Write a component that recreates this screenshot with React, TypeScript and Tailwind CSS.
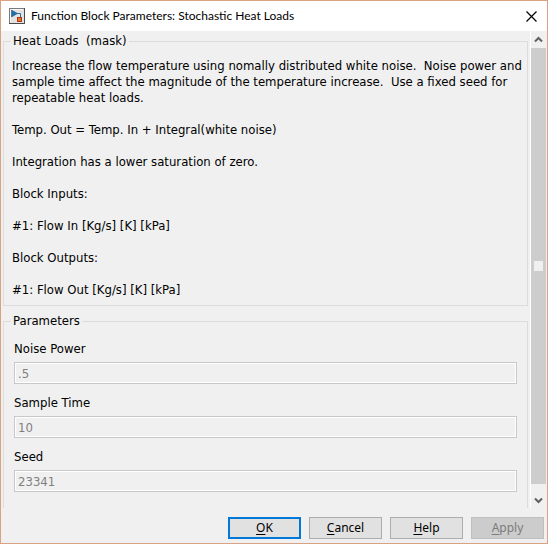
import type { ReactNode } from 'react';

const description = [
  'Temp. Out = Temp. In + Integral(white noise)',
  'Integration has a lower saturation of zero.',
  'Block Inputs:',
  '#1: Flow In [Kg/s] [K] [kPa]',
  'Block Outputs:',
  '#1: Flow Out [Kg/s] [K] [kPa]',
];

const parameters = [
  { id: 'noise-power', label: 'Noise Power', value: '.5' },
  { id: 'sample-time', label: 'Sample Time', value: '10' },
  { id: 'seed', label: 'Seed', value: '23341' },
];

function BlockIcon() {
  return (
    <svg width="16" height="16" viewBox="0 0 16 16" aria-hidden="true">
      <rect x="0.5" y="0.5" width="15" height="15" fill="#e2e2e2" stroke="#7a7a7a" />
      <path d="M15.5 0v15.5H0" fill="none" stroke="#4a4a4a" />
      <path d="M1.5 14V1.5H14" fill="none" stroke="#f8f8f8" />
      <path d="M8 5.5h3.5V9" fill="none" stroke="#2f6f9f" />
      <path d="M2.5 2v7L8.5 5.5z" fill="#1f6fa8" stroke="#174f80" strokeWidth="0.5" />
      <rect x="8.5" y="9.5" width="4" height="4" fill="#e8702a" stroke="#b03a10" />
    </svg>
  );
}

function Group({ title, className, children }: { title: string; className: string; children: ReactNode }) {
  return (
    <fieldset className={`min-w-0 border border-[#dcdcdc] ${className}`}>
      <legend className="ml-[7px] px-[2px] leading-4 whitespace-pre">{title}</legend>
      {children}
    </fieldset>
  );
}

function DialogButton({ label, kind = 'normal' }: { label: string; kind?: 'normal' | 'default' | 'disabled' }) {
  const look = {
    normal: 'border border-[#adadad] bg-[#e1e1e1] text-black',
    default: 'border-2 border-[#0078d7] bg-[#e1e1e1] text-black',
    disabled: 'border border-[#bfbfbf] bg-[#cccccc] text-[#7c7c7c]',
  }[kind];
  return (
    <button
      type="button"
      disabled={kind === 'disabled'}
      className={`flex h-[22px] w-[73px] items-center justify-center font-['Noto_Sans','Open_Sans',sans-serif] text-[12px] ${look}`}
    >
      <span className="underline underline-offset-2">{label[0]}</span>
      {label.slice(1)}
    </button>
  );
}

export default function App() {
  return (
    <div className="flex min-h-screen flex-col border border-[#d9a282] bg-[#f0f0f0] font-['DejaVu_Sans_Condensed','DejaVu_Sans',sans-serif] text-[13px] leading-4 text-black">
      <header className="flex h-[30px] items-center bg-white pl-2">
        <BlockIcon />
        <h1 className="ml-[6px] font-['Lato','Open_Sans',sans-serif] text-[12px]">
          Function Block Parameters: Stochastic Heat Loads
        </h1>
        <button type="button" aria-label="Close" className="mr-2 ml-auto flex size-4 items-center justify-center">
          <svg width="11" height="11" viewBox="0 0 11 11">
            <path d="M0.5 0.5l10 10M10.5 0.5l-10 10" stroke="#000" strokeWidth="1.2" />
          </svg>
        </button>
      </header>

      <div className="flex grow">
        <main className="flex min-w-0 grow flex-col gap-[7px] pt-[2px] pr-[2px] pl-[2px]">
          <Group title="Heat Loads  (mask)" className="pb-[7px]">
            <div className="mt-[9px] space-y-4 pl-2">
              <p>
                Increase the flow temperature using nomally distributed white noise.&nbsp; Noise power and sample time
                affect the magnitude of the temperature increase.&nbsp; Use a fixed seed for repeatable heat loads.
              </p>
              {description.map((line) => (
                <p key={line}>{line}</p>
              ))}
            </div>
          </Group>

          <Group title="Parameters" className="grow border-b-0 pb-[14px]">
            <div className="mt-3 flex flex-col gap-[11px] px-[10px]">
              {parameters.map(({ id, label, value }) => (
                <div key={id} className="flex flex-col gap-[5px]">
                  <label htmlFor={id}>{label}</label>
                  <input
                    id={id}
                    disabled
                    defaultValue={value}
                    className="h-[22px] w-full border border-[#c8c8c8] bg-[#f0f0f0] px-[3px] text-[#808080] inset-ring inset-ring-white"
                  />
                </div>
              ))}
            </div>
          </Group>
        </main>

        <div className="mr-[1px] flex w-4 shrink-0 flex-col border-l border-white">
          <button type="button" aria-label="Scroll up" className="flex h-[17px] items-center justify-center">
            <svg width="9" height="7" viewBox="0 0 9 7">
              <path d="M1 5.5l3.5-3.5L8 5.5" fill="none" stroke="#606060" strokeWidth="2" />
            </svg>
          </button>
          <div className="flex grow items-center justify-center bg-[#cdcdcd]">
            <span className="h-[10px] w-[9px] bg-[#f0f0f0]" />
          </div>
          <button type="button" aria-label="Scroll down" className="flex h-6 items-center justify-center pt-2">
            <svg width="9" height="7" viewBox="0 0 9 7">
              <path d="M1 1.5L4.5 5 8 1.5" fill="none" stroke="#606060" strokeWidth="2" />
            </svg>
          </button>
        </div>
      </div>

      <footer className="flex justify-end gap-2 pt-[9px] pr-[3px] pb-1">
        <DialogButton label="OK" kind="default" />
        <DialogButton label="Cancel" />
        <DialogButton label="Help" />
        <DialogButton label="Apply" kind="disabled" />
      </footer>
    </div>
  );
}
